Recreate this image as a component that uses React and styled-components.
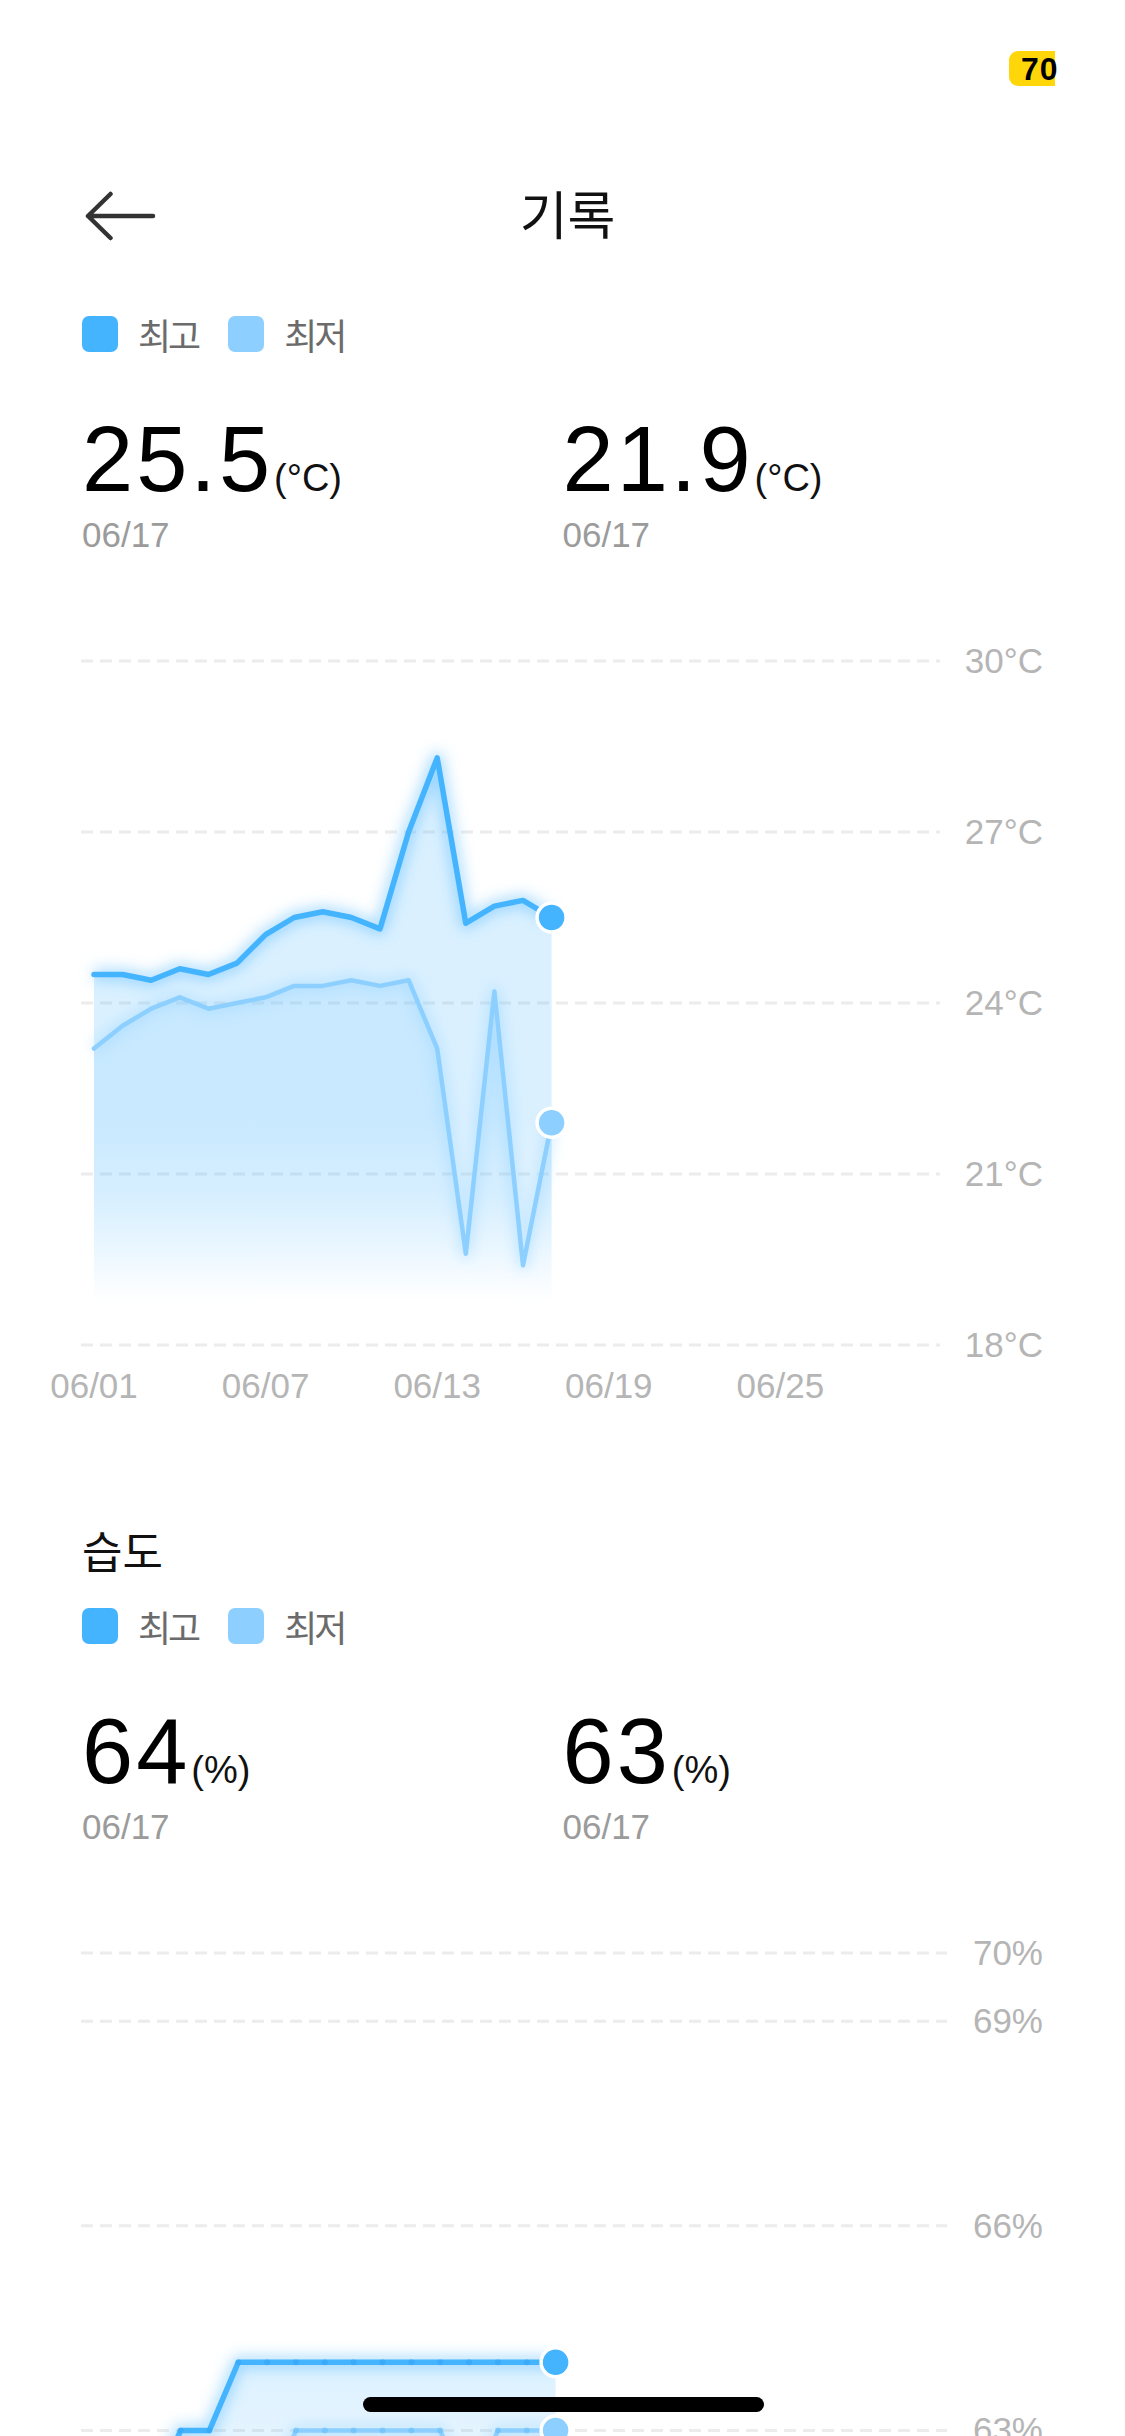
import React from "react";
import styled, { createGlobalStyle } from "styled-components";

const GlobalStyle = createGlobalStyle`
  html, body { margin: 0; padding: 0; background: #fff; }
  body { font-family: "Liberation Sans", "Noto Sans CJK KR", sans-serif; }
  * { box-sizing: border-box; }
`;

const MAX_COLOR = "#45b4ff";
const MIN_COLOR = "#8dd0ff";

const Screen = styled.div`
  position: relative;
  width: 1125px;
  height: 2436px;
  overflow: hidden;
  background: #fff;
`;

const StatusBar = styled.div`
  height: 132px;
  display: flex;
  justify-content: flex-end;
  align-items: flex-start;
  padding: 51px 70px 0 0;
`;

const BatteryBadge = styled.div`
  width: 46px;
  height: 35px;
  background: #ffd60a;
  border-radius: 9px 0 0 9px;
  display: flex;
  align-items: center;
  padding-left: 12px;
  font: 700 32px/1 "Liberation Sans", sans-serif;
  letter-spacing: 1px;
  color: #000;
  white-space: nowrap;
`;

const NavBar = styled.div`
  height: 168px;
  display: grid;
  grid-template-columns: 1fr auto 1fr;
  align-items: center;
  padding: 0 82px;
`;

const BackButton = styled.button`
  justify-self: start;
  background: none;
  border: 0;
  padding: 0;
  width: 76px;
  height: 50px;
  display: flex;
  align-items: center;
  cursor: pointer;
`;

const Title = styled.h1`
  margin: 0;
  padding: 0 0 6px 10px;
  font: 400 52px/1 "Noto Sans CJK KR", sans-serif;
  color: #111;
`;

const SectionTitle = styled.h2`
  margin: ${(p) => p.$top}px 0 0;
  padding: 0 82px;
  font: 400 44px/52px "Noto Sans CJK KR", sans-serif;
  color: #111;
`;

const Legend = styled.div`
  display: flex;
  align-items: center;
  height: 36px;
  padding: 0 82px;
  margin-top: ${(p) => p.$top}px;
`;

const LegendItem = styled.div`
  display: flex;
  align-items: center;
  gap: 20px;
  margin-right: 30px;
`;

const Swatch = styled.span`
  width: 36px;
  height: 36px;
  border-radius: 7px;
  background: ${(p) => p.$color};
`;

const LegendLabel = styled.span`
  font: 400 36px/1 "Noto Sans CJK KR", sans-serif;
  letter-spacing: -3px;
  color: #6b6b6b;
`;

const StatsRow = styled.div`
  display: grid;
  grid-template-columns: 1fr 1fr;
  padding: 0 82px;
  margin-top: 61px;
`;

const Stat = styled.div`
  display: flex;
  flex-direction: column;
  gap: 9px;
`;

const ValueLine = styled.div`
  display: flex;
  align-items: baseline;
`;

const Value = styled.span`
  font: 400 92px/92px "Liberation Sans", sans-serif;
  letter-spacing: 3px;
  color: #000;
`;

const Unit = styled.span`
  margin-left: 1px;
  font: 400 38px/1 "Liberation Sans", sans-serif;
  color: #111;
`;

const DateText = styled.span`
  font: 400 35px/42px "Liberation Sans", sans-serif;
  color: #9b9b9b;
`;

const ChartSvg = styled.svg`
  display: block;
  width: 1125px;
  height: ${(p) => p.$h}px;
`;

const HomeIndicator = styled.div`
  position: absolute;
  left: 50%;
  bottom: 24px;
  width: 401px;
  height: 15px;
  margin-left: -200px;
  border-radius: 8px;
  background: #000;
`;

const TEMP = {
  max: [24.5, 24.5, 24.4, 24.6, 24.5, 24.7, 25.2, 25.5, 25.6, 25.5, 25.3, 27.0, 28.3, 25.4, 25.7, 25.8, 25.5],
  min: [23.2, 23.6, 23.9, 24.1, 23.9, 24.0, 24.1, 24.3, 24.3, 24.4, 24.3, 24.4, 23.2, 19.6, 24.2, 19.4, 21.9],
};

const HUMID = {
  max: [62, 62, 62, 63, 63, 64, 64, 64, 64, 64, 64, 64, 64, 64, 64, 64, 64],
  min: [62, 62, 62, 62, 62, 62, 62, 63, 63, 63, 63, 63, 63, 62, 63, 63, 63],
};

const TEMP_CFG = {
  id: "t",
  height: 870,
  top: 105,
  unit: 57,
  vMax: 30,
  ticks: [30, 27, 24, 21, 18],
  fmt: (v) => `${v}°C`,
  x0: 94,
  step: 28.6,
  gridEnd: 940,
  floor: 789,
  fadeFrom: 560,
  fadeTo: 745,
  maxAlpha: 0.2,
  minAlpha: 0.12,
  xLabels: [
    [0, "06/01"],
    [6, "06/07"],
    [12, "06/13"],
    [18, "06/19"],
    [24, "06/25"],
  ],
  xLabelY: 842,
  vertexDots: false,
};

const HUMID_CFG = {
  id: "h",
  height: 640,
  top: 105,
  unit: 68.2,
  vMax: 70,
  ticks: [70, 69, 66, 63, 60],
  fmt: (v) => `${v}%`,
  x0: 94,
  step: 28.85,
  gridEnd: 947,
  floor: 900,
  fadeFrom: 520,
  fadeTo: 760,
  maxAlpha: 0.18,
  minAlpha: 0.1,
  xLabels: [],
  xLabelY: 0,
  vertexDots: true,
};

function TrendChart({ cfg, data }) {
  const y = (v) => cfg.top + (cfg.vMax - v) * cfg.unit;
  const x = (i) => cfg.x0 + i * cfg.step;
  const pts = (arr) => arr.map((v, i) => `${x(i).toFixed(1)},${y(v).toFixed(1)}`).join(" ");
  const area = (arr) => {
    const last = arr.length - 1;
    return (
      `M${x(0)},${y(arr[0])} ` +
      arr.map((v, i) => `L${x(i).toFixed(1)},${y(v).toFixed(1)}`).join(" ") +
      ` L${x(last)},${cfg.floor} L${x(0)},${cfg.floor} Z`
    );
  };
  const last = data.max.length - 1;
  const gid = cfg.id;

  return (
    <ChartSvg $h={cfg.height} viewBox={`0 0 1125 ${cfg.height}`}>
      <defs>
        <linearGradient id={`${gid}-maxfill`} gradientUnits="userSpaceOnUse" x1="0" y1={cfg.fadeFrom} x2="0" y2={cfg.fadeTo}>
          <stop offset="0" stopColor={MAX_COLOR} stopOpacity={cfg.maxAlpha} />
          <stop offset="0.45" stopColor={MAX_COLOR} stopOpacity={cfg.maxAlpha * 0.7} />
          <stop offset="1" stopColor={MAX_COLOR} stopOpacity="0" />
        </linearGradient>
        <linearGradient id={`${gid}-minfill`} gradientUnits="userSpaceOnUse" x1="0" y1={cfg.fadeFrom} x2="0" y2={cfg.fadeTo}>
          <stop offset="0" stopColor={MAX_COLOR} stopOpacity={cfg.minAlpha} />
          <stop offset="0.45" stopColor={MAX_COLOR} stopOpacity={cfg.minAlpha * 0.7} />
          <stop offset="1" stopColor={MAX_COLOR} stopOpacity="0" />
        </linearGradient>
        <filter id={`${gid}-glow`} x="-20%" y="-20%" width="140%" height="140%">
          <feGaussianBlur stdDeviation="7" />
        </filter>
      </defs>

      {cfg.ticks.map((v) => (
        <g key={v}>
          <line x1="81" x2={cfg.gridEnd} y1={y(v)} y2={y(v)} stroke="#ececec" strokeWidth="3" strokeDasharray="12 7" />
          <text
            x="1043"
            y={y(v) + 12}
            textAnchor="end"
            fontFamily="Liberation Sans, sans-serif"
            fontSize="35"
            fill="#b5b5b5"
          >
            {cfg.fmt(v)}
          </text>
        </g>
      ))}

      <path d={area(data.max)} fill={`url(#${gid}-maxfill)`} />
      <path d={area(data.min)} fill={`url(#${gid}-minfill)`} />

      <polyline points={pts(data.max)} fill="none" stroke={MAX_COLOR} strokeWidth="12" strokeOpacity="0.45" strokeLinejoin="round" filter={`url(#${gid}-glow)`} />
      <polyline points={pts(data.min)} fill="none" stroke={MIN_COLOR} strokeWidth="10" strokeOpacity="0.45" strokeLinejoin="round" filter={`url(#${gid}-glow)`} />

      <polyline points={pts(data.min)} fill="none" stroke={MIN_COLOR} strokeWidth="4.5" strokeLinejoin="round" strokeLinecap="round" />
      <polyline points={pts(data.max)} fill="none" stroke={MAX_COLOR} strokeWidth="5.5" strokeLinejoin="round" strokeLinecap="round" />

      {cfg.vertexDots &&
        data.max.map((v, i) =>
          i < last ? <circle key={`m${i}`} cx={x(i)} cy={y(v)} r="3" fill="#2a9ff0" fillOpacity="0.45" /> : null
        )}
      {cfg.vertexDots &&
        data.min.map((v, i) =>
          i < last ? <circle key={`n${i}`} cx={x(i)} cy={y(v)} r="3" fill="#5ab9f5" fillOpacity="0.45" /> : null
        )}

      <circle cx={x(last)} cy={y(data.max[last])} r="14.5" fill={MAX_COLOR} stroke="#fff" strokeWidth="3.5" />
      <circle cx={x(last)} cy={y(data.min[last])} r="14.5" fill={MIN_COLOR} stroke="#fff" strokeWidth="3.5" />

      {cfg.xLabels.map(([i, label]) => (
        <text
          key={label}
          x={x(i)}
          y={cfg.xLabelY}
          textAnchor="middle"
          fontFamily="Liberation Sans, sans-serif"
          fontSize="35"
          fill="#b5b5b5"
        >
          {label}
        </text>
      ))}
    </ChartSvg>
  );
}

function LegendRow({ top }) {
  return (
    <Legend $top={top}>
      <LegendItem>
        <Swatch $color={MAX_COLOR} />
        <LegendLabel>최고</LegendLabel>
      </LegendItem>
      <LegendItem>
        <Swatch $color={MIN_COLOR} />
        <LegendLabel>최저</LegendLabel>
      </LegendItem>
    </Legend>
  );
}

function Stats({ items }) {
  return (
    <StatsRow>
      {items.map((s, i) => (
        <Stat key={i}>
          <ValueLine>
            <Value>{s.value}</Value>
            <Unit>{s.unit}</Unit>
          </ValueLine>
          <DateText>{s.date}</DateText>
        </Stat>
      ))}
    </StatsRow>
  );
}

export default function App() {
  return (
    <Screen>
      <GlobalStyle />
      <StatusBar>
        <BatteryBadge>70</BatteryBadge>
      </StatusBar>

      <NavBar>
        <BackButton aria-label="뒤로">
          <svg width="76" height="50" viewBox="0 0 76 50">
            <path
              d="M6 25 H71 M28.5 3 L6 25 L28.5 47"
              fill="none"
              stroke="#333"
              strokeWidth="4.5"
              strokeLinecap="round"
              strokeLinejoin="round"
            />
          </svg>
        </BackButton>
        <Title>기록</Title>
        <span />
      </NavBar>

      <LegendRow top={16} />
      <Stats
        items={[
          { value: "25.5", unit: "(°C)", date: "06/17" },
          { value: "21.9", unit: "(°C)", date: "06/17" },
        ]}
      />
      <TrendChart cfg={TEMP_CFG} data={TEMP} />

      <SectionTitle $top={98}>습도</SectionTitle>
      <LegendRow top={32} />
      <Stats
        items={[
          { value: "64", unit: "(%)", date: "06/17" },
          { value: "63", unit: "(%)", date: "06/17" },
        ]}
      />
      <TrendChart cfg={HUMID_CFG} data={HUMID} />

      <HomeIndicator />
    </Screen>
  );
}
